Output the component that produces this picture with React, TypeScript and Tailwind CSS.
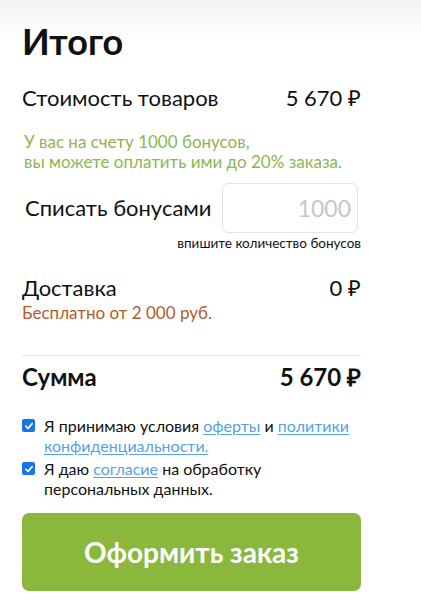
const Checkbox = () => (
  <span className="mt-[3px] flex h-[13px] w-[13px] shrink-0 items-center justify-center rounded-[2px] bg-[#1a73e8]">
    <svg viewBox="0 0 12 12" className="h-[10px] w-[10px]" fill="none">
      <path d="M2.2 6.3 4.8 8.8 9.8 3.2" stroke="white" strokeWidth="2" strokeLinecap="round" strokeLinejoin="round" />
    </svg>
  </span>
);

const linkCls = "text-[#55a2ea] underline underline-offset-2";

const App = () => {
  return (
    <div className="min-h-[609px] w-[421px] bg-[linear-gradient(to_bottom,#f3f3f3_0px,#f9f9f9_22px,#ffffff_44px)] text-[#111] [font-family:Lato,'Liberation_Sans',sans-serif]">
      <div className="box-content w-[339px] px-[22px] pt-[21px]">
        <h1 className="text-[36px] font-bold leading-[40px]">Итого</h1>

        <div className="mt-[24px] flex items-center justify-between text-[22px] leading-[26px]">
          <span>Стоимость товаров</span>
          <span>5 670 ₽</span>
        </div>

        <p className="mt-[21px] pl-[2px] text-[17px] leading-[20px] text-[#8db552]">
          У вас на счету 1000 бонусов,
          <br />
          вы можете оплатить ими до 20% заказа.
        </p>

        <div className="mt-[11px] flex items-center justify-between pl-[3px]">
          <span className="text-[22px] leading-[26px]">Списать бонусами</span>
          <div className="mr-[3px] flex h-[50px] w-[136px] items-center justify-end rounded-[6px] border border-[#e3e3e3] bg-white px-[6px] text-[23px] text-[#c6c6c6]">
            1000
          </div>
        </div>
        <p className="mt-[2px] text-right text-[13.5px] leading-[16px]">впишите количество бонусов</p>

        <div className="mt-[24px] flex items-center justify-between text-[22px] leading-[26px]">
          <span>Доставка</span>
          <span>0 ₽</span>
        </div>
        <p className="mt-[2px] text-[17px] leading-[20px] text-[#b35a2e]">Бесплатно от 2 000 руб.</p>

        <hr className="mt-[32px] h-px border-0 bg-[#e8e8e8]" />

        <div className="mt-[7px] flex items-center justify-between text-[24px] font-bold leading-[28px]">
          <span>Сумма</span>
          <span>5 670 ₽</span>
        </div>

        <div className="mt-[25px] flex flex-col gap-[3px] text-[16px] leading-[20px]">
          <label className="flex gap-[9px]">
            <Checkbox />
            <span>
              Я принимаю условия <a className={linkCls}>оферты</a> и <a className={linkCls}>политики</a>
              <br />
              <a className={linkCls}>конфиденциальности.</a>
            </span>
          </label>
          <label className="flex gap-[9px]">
            <Checkbox />
            <span>
              Я даю <a className={linkCls}>согласие</a> на обработку
              <br />
              персональных данных.
            </span>
          </label>
        </div>

        <button className="mt-[14px] flex h-[78px] w-full items-center justify-center rounded-[7px] bg-[#8ab83c] text-[28px] font-bold text-white">
          Оформить заказ
        </button>
      </div>
    </div>
  );
};

export default App;
